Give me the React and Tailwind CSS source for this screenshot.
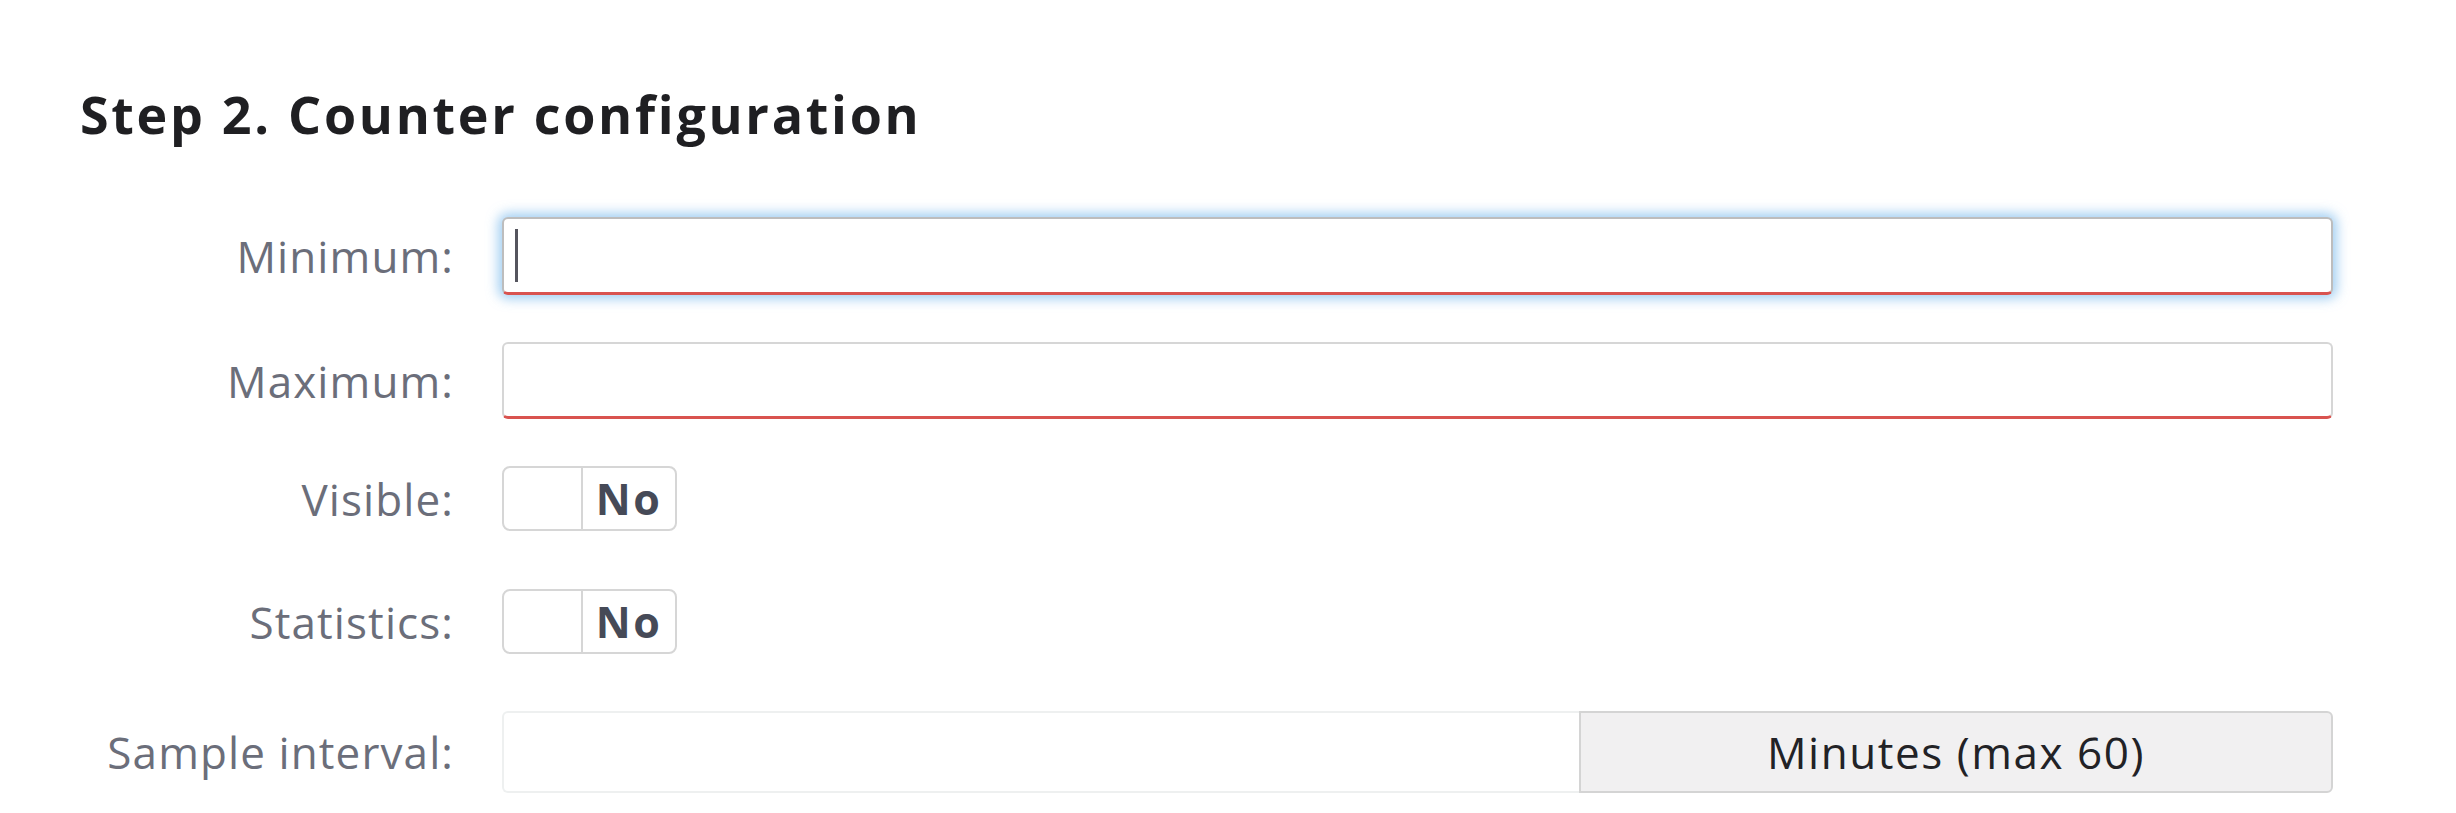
import React from 'react';

const font = { fontFamily: '"Open Sans", Lato, sans-serif' };

function Field({ label, children, className = '' }) {
    return (
        <div className={`flex items-center gap-[48px] ${className}`}>
            <label className="w-[374px] shrink-0 text-right text-[44px] leading-none tracking-[0.025em] text-[#6b6e7a]">{label}</label>
            <div className="flex-1">{children}</div>
        </div>
    );
}

function Toggle() {
    return (
        <div className="flex h-[65px] w-[175px] rounded-[8px] border-2 border-[#d6d6d6] bg-white">
            <div className="w-[79px] border-r-2 border-[#d6d6d6]" />
            <div className="flex flex-1 items-center justify-center text-[43px] font-bold tracking-[0.06em] text-[#464a57]">No</div>
        </div>
    );
}

export default function App() {
    return (
        <div className="min-h-[813px] bg-white pl-[80px] pr-[123px] pt-[83px]" style={font}>
            <h2 className="mb-[72px] text-[52px] font-bold leading-[1.2] tracking-[0.052em] text-[#1f1f22]">Step 2. Counter configuration</h2>

            <Field label="Minimum:" className="mb-[47px]">
                <div className="flex h-[78px] items-center rounded-[6px] border-2 border-b-[3px] border-[#bdbdbd] border-b-[#d9534f] bg-white pl-[11px] shadow-[0_0_12px_4px_rgba(102,175,233,0.6)]">
                    <div className="h-[53px] w-[3px] bg-[#55555e]" />
                </div>
            </Field>

            <Field label="Maximum:" className="mb-[47px]">
                <div className="h-[77px] rounded-[6px] border-2 border-b-[3px] border-[#d6d6d6] border-b-[#d9534f] bg-white" />
            </Field>

            <Field label="Visible:" className="mb-[58px]">
                <Toggle />
            </Field>

            <Field label="Statistics:" className="mb-[57px]">
                <Toggle />
            </Field>

            <Field label="Sample interval:">
                <div className="flex h-[82px]">
                    <div className="flex-1 rounded-l-[6px] border-2 border-r-0 border-[#eef0f0] bg-white" />
                    <div className="flex w-[754px] items-center justify-center rounded-r-[6px] border-2 border-[#d4d4d4] bg-[#f1f0f1] text-[44px] tracking-[0.035em] text-[#222226]">
                        Minutes (max 60)
                    </div>
                </div>
            </Field>
        </div>
    );
}
